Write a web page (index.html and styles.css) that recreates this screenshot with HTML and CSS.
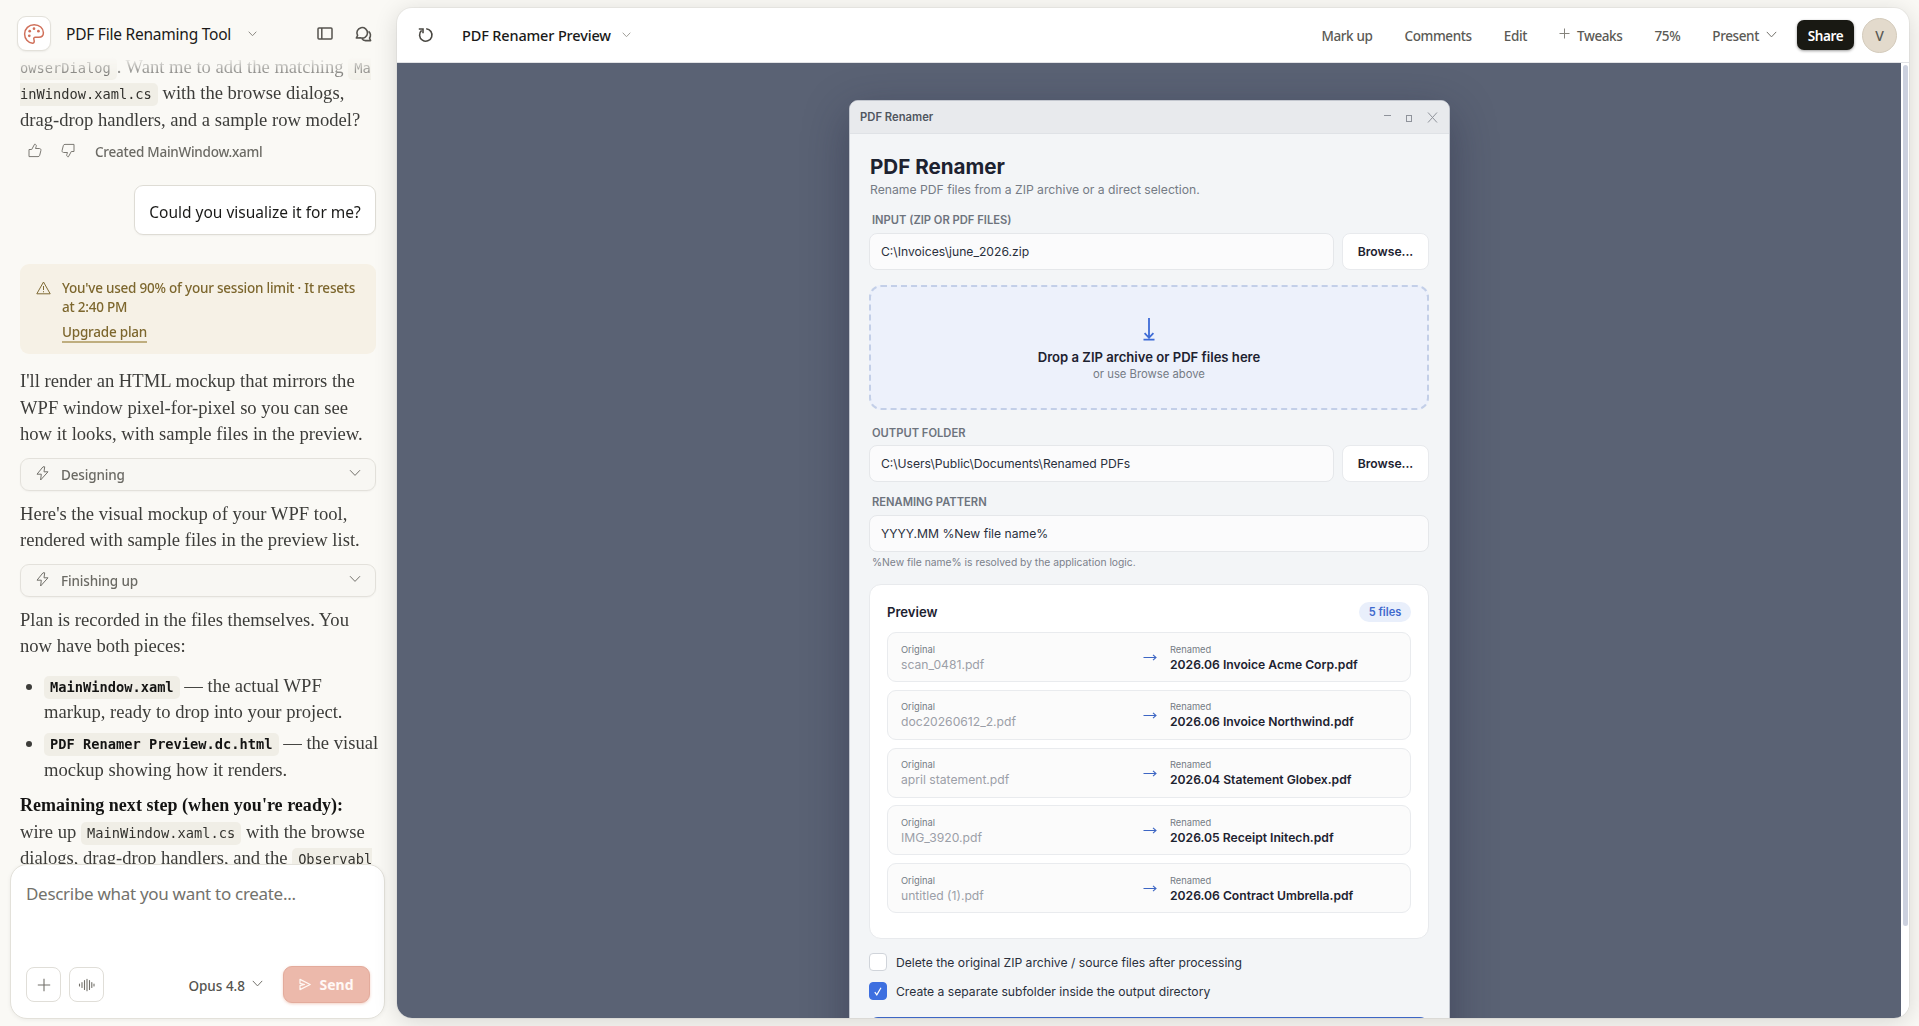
FILE: index.html
```html
<!DOCTYPE html>
<html lang="en">
<head>
	<meta charset="utf-8">
	<title>PDF File Renaming Tool</title>
	<link rel="stylesheet" href="styles.css">
</head>
<body>
	<div class="side">
		<div class="side-head">
			<div class="logo">
				<svg width="22" height="22" viewBox="0 0 22 22" fill="none" stroke="#d0705a" stroke-width="1.5" stroke-linecap="round" stroke-linejoin="round">
					<path d="M9.6 20.2C5 19.6 1.6 15.700 1.600 11C1.600 5.800 5.900 1.700 11.200 1.700C16.400 1.700 20.400 5.300 20.400 9.800C20.400 12.700 18.200 14.300 15.700 14.300H12.400C11 14.300 10.400 15.200 10.900 16.400C11.600 18.300 11.300 20.300 9.600 20.200Z"/>
					<g fill="#d0705a" stroke="none"><circle cx="6.300" cy="12.800" r="1.350"/><circle cx="6.700" cy="8.200" r="1.350"/><circle cx="11" cy="5.700" r="1.350"/><circle cx="15.400" cy="8.200" r="1.350"/></g>
				</svg>
			</div>
			<span class="side-title">PDF File Renaming Tool</span>
			<svg class="title-arrow" width="9" height="6" viewBox="0 0 9 6" fill="none" stroke="#8c8a84"><path d="M.7 .7L4.500 4.700L8.300 .7"/></svg>
			<svg class="ico-panel" width="16" height="13" viewBox="0 0 16 13" fill="none" stroke="#55534e" stroke-width="1.500"><rect x="1" y="1" width="14" height="11" rx="1"/><path d="M4.800 1V12"/></svg>
			<svg class="ico-chat" width="17" height="16" viewBox="0 0 17 16" fill="none" stroke="#55534e" stroke-width="1.600" stroke-linejoin="round"><path d="M1.300 12L2.600 9.500A5.300 5.300 0 1 1 5.300 11.800Z"/><path d="M13.600 5.400C15.800 7 16 10.200 14.500 12L15.600 14.600H10.500C9 14.600 7.700 13.900 7 12.600"/></svg>
		</div>
		<div class="chat">
			<p><code class="cut-left">owserDialog</code>. Want me to add the matching <code class="cut-right">Ma</code><br><code class="cut-left">inWindow.xaml.cs</code> with the browse dialogs,<br>drag-drop handlers, and a sample row model?</p>
			<div class="feedback">
				<svg width="14" height="15" viewBox="0 0 14 15" fill="none" stroke="#7b7973" stroke-linejoin="round"><path d="M1 6.500H3.700L6.600 1.200C8 1.200 8.600 2.300 8.200 3.500L7.500 5.500H11.300C12.500 5.500 13.200 6.400 12.900 7.500L11.700 12.300C11.500 13.200 10.900 13.600 10 13.600H1Z"/></svg>
				<svg width="14" height="15" viewBox="0 0 14 15" fill="none" stroke="#7b7973" stroke-linejoin="round"><path d="M13 8.500H10.300L7.400 13.800C6 13.800 5.400 12.700 5.800 11.500L6.500 9.500H2.700C1.500 9.500 .8 8.600 1.100 7.500L2.300 2.700C2.500 1.800 3.100 1.400 4 1.400H13Z"/></svg>
				<span>Created MainWindow.xaml</span>
			</div>
			<div class="bubble">Could you visualize it for me?</div>
			<div class="limit">
				<svg width="15" height="14" viewBox="0 0 15 14" fill="none" stroke="#7f6a34" stroke-linejoin="round"><path d="M7.500 1L14.200 12.800H.8Z"/><path d="M7.500 5V9M7.500 10.200V11.300"/></svg>
				<div>You've used 90% of your session limit · It resets<br>at 2:40 PM<br><a class="upgrade">Upgrade plan</a></div>
			</div>
			<p>I'll render an HTML mockup that mirrors the<br>WPF window pixel-for-pixel so you can see<br>how it looks, with sample files in the preview.</p>
			<div class="step">
				<svg width="13" height="15" viewBox="0 0 13 15" fill="none" stroke="#73716b" stroke-linejoin="round"><path d="M7 .8L1 8.200H5.300L4.600 14L12 5.800H8L8.700 .8Z"/></svg>
				<span>Designing</span>
				<svg width="12" height="8" viewBox="0 0 12 8" fill="none" stroke="#73716b"><path d="M1 1.200L6 6.400L11 1.200"/></svg>
			</div>
			<p>Here's the visual mockup of your WPF tool,<br>rendered with sample files in the preview list.</p>
			<div class="step">
				<svg width="13" height="15" viewBox="0 0 13 15" fill="none" stroke="#73716b" stroke-linejoin="round"><path d="M7 .8L1 8.200H5.300L4.600 14L12 5.800H8L8.700 .8Z"/></svg>
				<span>Finishing up</span>
				<svg width="12" height="8" viewBox="0 0 12 8" fill="none" stroke="#73716b"><path d="M1 1.200L6 6.400L11 1.200"/></svg>
			</div>
			<p>Plan is recorded in the files themselves. You<br>now have both pieces:</p>
			<ul>
				<li><code>MainWindow.xaml</code> — the actual WPF<br>markup, ready to drop into your project.</li>
				<li><code>PDF Renamer Preview.dc.html</code> — the visual<br>mockup showing how it renders.</li>
			</ul>
			<p><b>Remaining next step (when you're ready):</b><br>wire up <code>MainWindow.xaml.cs</code> with the browse<br>dialogs, drag-drop handlers, and the <code class="cut-right">Observabl</code></p>
		</div>
		<div class="composer">
			<div class="placeholder">Describe what you want to create...</div>
			<div class="tools">
				<button class="sq"><svg width="14" height="14" viewBox="0 0 14 14" stroke="#73716b" stroke-width="1.100"><path d="M7 .8V13.200M.8 7H13.200"/></svg></button>
				<button class="sq"><svg width="17" height="14" viewBox="0 0 17 14" stroke="#73716b" stroke-width="1.100" stroke-linecap="round"><path d="M1.500 6V8M4 4.500V9.500M6.500 2.500V11.500M9 1.200V12.800M11.500 2.500V11.500M13.800 4.500V9.500M16 6V8"/></svg></button>
				<span class="model">Opus 4.8 <svg width="11" height="7" viewBox="0 0 11 7" fill="none" stroke="#73716b"><path d="M.8 .9L5.500 5.900L10.200 .9"/></svg></span>
				<button class="send"><svg width="12" height="13" viewBox="0 0 12 13" fill="none" stroke="#fff8f5" stroke-width="1.200" stroke-linejoin="round"><path d="M1 1.400L11.200 6.500L1 11.600V7.700L5.600 6.500L1 5.300Z"/></svg>Send</button>
			</div>
		</div>
	</div>

	<div class="panel">
		<div class="panel-head">
			<svg class="reload" width="16" height="16" viewBox="0 0 16 16" fill="none" stroke="#4a4843" stroke-width="1.600"><path d="M3.600 3.400A6.200 6.200 0 1 0 8.200 1.800"/><path d="M.8 2H5V6.200"/></svg>
			<span class="file-name">PDF Renamer Preview</span>
			<svg class="file-arrow" width="9" height="6" viewBox="0 0 9 6" fill="none" stroke="#a19f99"><path d="M.7 .7L4.500 4.700L8.300 .7"/></svg>
			<div class="actions">
				<span>Mark up</span>
				<span>Comments</span>
				<span>Edit</span>
				<span class="tweaks"><svg width="11" height="11" viewBox="0 0 11 11" stroke="#85837d"><path d="M5.500 .5V10.500M.5 5.500H10.500"/></svg>Tweaks</span>
				<span>75%</span>
				<span class="present">Present<svg width="11" height="7" viewBox="0 0 11 7" fill="none" stroke="#73716b"><path d="M.8 .9L5.500 5.900L10.200 .9"/></svg></span>
			</div>
			<button class="share">Share</button>
			<div class="avatar">V</div>
		</div>
		<div class="stage">
			<div class="canvas">
				<div class="window">
					<div class="titlebar">
						<span>PDF Renamer</span>
						<svg width="54" height="12" viewBox="0 0 54 12" fill="none" stroke="#8f939b"><path d="M0 4.500H7"/><rect x="22.500" y="4.500" width="5" height="6"/><path d="M44 1.500L53 11.500M53 1.500L44 11.500"/></svg>
					</div>
					<div class="form">
						<h1>PDF Renamer</h1>
						<div class="sub">Rename PDF files from a ZIP archive or a direct selection.</div>
						<div class="label">INPUT (ZIP OR PDF FILES)</div>
						<div class="row">
							<div class="input">C:\Invoices\june_2026.zip</div>
							<button class="browse">Browse...</button>
						</div>
						<div class="drop">
							<svg width="12" height="23" viewBox="0 0 12 23" fill="none" stroke="#3d6bd6" stroke-width="1.800"><path d="M6 0V20M1.600 15.200L6 19.800L10.400 15.200M.5 21.700H11.500"/></svg>
							<b>Drop a ZIP archive or PDF files here</b>
							<span>or use Browse above</span>
						</div>
						<div class="label label-output">OUTPUT FOLDER</div>
						<div class="row">
							<div class="input">C:\Users\Public\Documents\Renamed PDFs</div>
							<button class="browse">Browse...</button>
						</div>
						<div class="label label-pattern">RENAMING PATTERN</div>
						<div class="row">
							<div class="input">YYYY.MM %New file name%</div>
						</div>
						<div class="hint">%New file name% is resolved by the application logic.</div>
						<div class="preview">
							<div class="preview-head"><b>Preview</b><span class="count">5 files</span></div>
							<div class="item">
								<div class="old"><small>Original</small>scan_0481.pdf</div>
								<svg width="14" height="7" viewBox="0 0 14 7" fill="none" stroke="#3d66c4" stroke-width="1.100"><path d="M.5 3.500H13M10 .8L13 3.500L10 6.200"/></svg>
								<div class="new"><small>Renamed</small>2026.06 Invoice Acme Corp.pdf</div>
							</div>
							<div class="item">
								<div class="old"><small>Original</small>doc20260612_2.pdf</div>
								<svg width="14" height="7" viewBox="0 0 14 7" fill="none" stroke="#3d66c4" stroke-width="1.100"><path d="M.5 3.500H13M10 .8L13 3.500L10 6.200"/></svg>
								<div class="new"><small>Renamed</small>2026.06 Invoice Northwind.pdf</div>
							</div>
							<div class="item">
								<div class="old"><small>Original</small>april statement.pdf</div>
								<svg width="14" height="7" viewBox="0 0 14 7" fill="none" stroke="#3d66c4" stroke-width="1.100"><path d="M.5 3.500H13M10 .8L13 3.500L10 6.200"/></svg>
								<div class="new"><small>Renamed</small>2026.04 Statement Globex.pdf</div>
							</div>
							<div class="item">
								<div class="old"><small>Original</small>IMG_3920.pdf</div>
								<svg width="14" height="7" viewBox="0 0 14 7" fill="none" stroke="#3d66c4" stroke-width="1.100"><path d="M.5 3.500H13M10 .8L13 3.500L10 6.200"/></svg>
								<div class="new"><small>Renamed</small>2026.05 Receipt Initech.pdf</div>
							</div>
							<div class="item">
								<div class="old"><small>Original</small>untitled (1).pdf</div>
								<svg width="14" height="7" viewBox="0 0 14 7" fill="none" stroke="#3d66c4" stroke-width="1.100"><path d="M.5 3.500H13M10 .8L13 3.500L10 6.200"/></svg>
								<div class="new"><small>Renamed</small>2026.06 Contract Umbrella.pdf</div>
							</div>
						</div>
						<div class="check"><i></i>Delete the original ZIP archive / source files after processing</div>
						<div class="check"><i class="on"><svg width="8" height="9" viewBox="0 0 8 9" fill="none" stroke="#fff" stroke-width="1.200"><path d="M.8 5.200L2.800 7.900L7 .8"/></svg></i>Create a separate subfolder inside the output directory</div>
						<div class="start"></div>
					</div>
				</div>
			</div>
			<div class="scroll"><div class="thumb"></div></div>
		</div>
	</div>
</body>
</html>
```
FILE: styles.css
```css
*{
	box-sizing: border-box;
}
body{
	display: flex;
	margin: 0;
	height: 1026px;
	overflow: hidden;
	background: #faf9f5;
	font-family: "Segoe UI", "Noto Sans", "Open Sans", sans-serif;
	color: #1a1a18;
}
svg{
	display: block;
	flex: none;
}
button{
	font-family: inherit;
	padding: 0;
}

/* sidebar */
.side{
	flex: none;
	width: 397px;
	height: 1026px;
	display: flex;
	flex-direction: column;
	white-space: nowrap;
}
.side-head{
	flex: none;
	height: 54px;
	display: flex;
	align-items: center;
	padding: 13px 0 0 17px;
}
.logo{
	width: 34px;
	height: 35px;
	display: flex;
	align-items: center;
	justify-content: center;
	background: #fff;
	border: 1px solid #e3e1da;
	border-radius: 9px;
	box-shadow: 0 1px 2px rgba(0,0,0,0.06);
}
.side-title{
	margin-left: 15px;
	width: 182px;
	font-size: 15.500px;
	letter-spacing: -0.230px;
}
.ico-panel{
	margin: -1px 0 0 60px;
}
.ico-chat{
	margin-left: 22px;
}
.chat{
	height: 810px;
	overflow: hidden;
	padding: 0 21px 0 20px;
	-webkit-mask-image: linear-gradient(to bottom, transparent 3px, #000 31px);
	mask-image: linear-gradient(to bottom, transparent 3px, #000 31px);
}
.chat p, .chat ul{
	margin: 0;
	font: 18.600px/26.450px "Liberation Serif", serif;
	color: #3d3d3a;
}
.chat p + .step{
	margin-top: 10px;
}
.step + p{
	margin-top: 10px;
}
.chat b{
	font-size: 18px;
	letter-spacing: 0.030px;
	color: #141413;
}
code{
	font: 13.700px/23px "DejaVu Sans Mono", monospace;
	padding: 3px 6px 4px;
	background: #f0eee6;
	border-radius: 5px;
	color: #33322e;
}
.cut-left{
	padding-left: 0;
	border-radius: 0 5px 5px 0;
}
.cut-right{
	padding-right: 0;
	border-radius: 5px 0 0 5px;
}
li code{
	font-weight: 700;
	color: #141413;
}
.feedback{
	display: flex;
	align-items: center;
	height: 26px;
	margin-top: 6px;
	padding-left: 8px;
	font-size: 13.500px;
	font-weight: 500;
	letter-spacing: -0.250px;
	color: #6b6a64;
}
.feedback svg{
	margin: -4px 19px 0 0;
}
.feedback span{
	margin-left: 1px;
}
.bubble{
	width: 242px;
	height: 50px;
	margin: 20px 0 29px auto;
	font-size: 15.500px;
	line-height: 53px;
	text-align: center;
	background: #fff;
	border: 1px solid #dedcd5;
	border-radius: 9px;
	box-shadow: 0 1px 2px rgba(0,0,0,0.04);
}
.limit{
	display: flex;
	height: 90px;
	margin-bottom: 14px;
	padding: 15px 0 0 16px;
	background: #f6f1e6;
	border-radius: 9px;
	font-size: 13.500px;
	font-weight: 500;
	line-height: 19px;
	letter-spacing: -0.220px;
	color: #7d672e;
}
.limit svg{
	margin: 2px 11px 0 0;
}
.upgrade{
	display: inline-block;
	margin-top: 6px;
	line-height: 18px;
	border-bottom: 2px solid #bfae7f;
}
.step{
	display: flex;
	align-items: center;
	height: 33px;
	padding: 0 14px 0 15px;
	background: #f8f7f3;
	border: 1px solid #e3e1db;
	border-radius: 9px;
	box-shadow: 0 1px 2px rgba(0,0,0,0.04);
	font-size: 13.500px;
	font-weight: 500;
	letter-spacing: -0.150px;
	color: #6b6a64;
}
.step svg{
	margin-top: -2px;
}
.step span{
	flex: 1;
	margin: 2px 0 0 12px;
}
.chat ul{
	margin: 13px 0 9px;
	padding-left: 24px;
}
li + li{
	margin-top: 5px;
}
.composer{
	flex: none;
	width: 375px;
	height: 155px;
	margin-left: 10px;
	padding: 16px 14px 15px 15px;
	display: flex;
	flex-direction: column;
	justify-content: space-between;
	background: #fff;
	border: 1px solid #e3e1da;
	border-radius: 17px;
	box-shadow: 0 1px 4px rgba(0,0,0,0.06);
}
.placeholder{
	font-size: 17px;
	line-height: 26px;
	letter-spacing: -0.300px;
	color: #73726c;
}
.tools{
	display: flex;
	align-items: center;
}
.sq{
	width: 35px;
	height: 35px;
	margin-right: 8px;
	display: flex;
	align-items: center;
	justify-content: center;
	background: #fff;
	border: 1px solid #e0ded8;
	border-radius: 8px;
}
.model{
	display: flex;
	align-items: center;
	gap: 7px;
	margin-left: auto;
	font-size: 13.500px;
	font-weight: 500;
	line-height: 20px;
	padding-top: 2px;
	color: #55544f;
}
.model svg{
	margin-top: -5px;
}
.send{
	width: 87px;
	height: 37px;
	margin-left: 20px;
	display: flex;
	align-items: center;
	justify-content: center;
	gap: 8px;
	background: #ecb9ab;
	border: 1px solid #e3ab9c;
	border-radius: 9px;
	box-shadow: 0 1px 3px rgba(217,119,87,0.35);
	font-size: 14px;
	font-weight: 700;
	color: #fff8f5;
}

/* preview panel */
.panel{
	position: relative;
	flex: none;
	width: 1512px;
	height: 1010px;
	margin-top: 8px;
	background: #fff;
	border-radius: 15px;
	overflow: hidden;
	box-shadow: 0 0 0 1px rgba(0,0,0,0.04), 0 4px 24px rgba(0,0,0,0.14);
}
.panel-head{
	height: 55px;
	display: flex;
	align-items: center;
	padding: 0 12px 0 21px;
	border-bottom: 1px solid #e2e3e6;
}
.reload{
	margin: -1px 28px 0 0;
}
.file-name{
	width: 149px;
	font-size: 14.500px;
	font-weight: 500;
	letter-spacing: -0.150px;
	white-space: nowrap;
}
.file-arrow{
	margin: -1px 0 0 11px;
}
.actions{
	margin: 1px 0 0 auto;
	display: flex;
	align-items: center;
	gap: 32px;
	font-size: 13.500px;
	font-weight: 500;
	letter-spacing: -0.380px;
	line-height: 22px;
	color: #5b5a55;
}
.tweaks, .present{
	display: flex;
	gap: 7px;
}
.tweaks svg{
	margin-top: 3px;
}
.present svg{
	margin-top: 6px;
}
.share{
	width: 57px;
	height: 30px;
	margin: 0 8px 0 20px;
	background: #191913;
	border: 0;
	border-radius: 7px;
	box-shadow: 0 1px 3px rgba(0,0,0,0.4);
	font-size: 13.500px;
	font-weight: 600;
	letter-spacing: -0.350px;
	line-height: 32px;
	color: #fff;
}
.avatar{
	width: 35px;
	height: 35px;
	background: #e3dacc;
	border: 1px solid #d3cabb;
	border-radius: 50%;
	text-align: center;
	font-size: 14px;
	font-weight: 500;
	line-height: 34px;
	color: #5b5a55;
}
.stage{
	display: flex;
	height: 955px;
}
.canvas{
	flex: 1;
	height: 955px;
	overflow: hidden;
	background: #5a6274;
	padding: 37px 0 0 452px;
}
.scroll{
	width: 8px;
	padding: 2px 1px 0 2px;
	background: #fff;
}
.thumb{
	height: 861px;
	background: #ccd1df;
	border-radius: 3px;
}

/* renamer window */
.window{
	width: 601px;
	height: 1000px;
	background: #f3f5f7;
	border: 1px solid #c3c7cf;
	border-radius: 9px;
	box-shadow: 0 14px 45px rgba(30,33,60,0.42);
	font-family: Inter, sans-serif;
	color: #1d2230;
	overflow: hidden;
}
.titlebar{
	display: flex;
	align-items: center;
	justify-content: space-between;
	height: 33px;
	padding: 0 11px 0 10px;
	background: #e8eaed;
	border-bottom: 1px solid #dfe2e6;
	font-size: 11.250px;
	font-weight: 600;
	color: #50565f;
}
.form{
	padding: 19px 20px 0 19px;
}
h1{
	margin: 0 0 0 1px;
	font-size: 20.600px;
	line-height: 28px;
	font-weight: 700;
}
.sub{
	margin-left: 1px;
	font-size: 12.180px;
	line-height: 18px;
	color: #757b85;
}
.label{
	margin: 13px 0 5px 3px;
	font-size: 11.200px;
	font-weight: 600;
	line-height: 16px;
	color: #6d737d;
}
.row{
	display: flex;
	gap: 8px;
	height: 37px;
}
.input{
	flex: 1;
	padding-left: 11px;
	background: #fbfbfc;
	border: 1px solid #e5e7ea;
	border-radius: 8px;
	font-size: 12.150px;
	line-height: 35px;
	color: #2a303c;
}
.browse{
	width: 87px;
	background: #fff;
	border: 1px solid #e8eaed;
	border-radius: 8px;
	font-size: 12.150px;
	font-weight: 600;
	color: #1d2230;
}
.drop{
	display: flex;
	flex-direction: column;
	align-items: center;
	height: 125px;
	margin-top: 15px;
	padding-top: 31px;
	background: #edf1fb;
	border: 2px dashed #c3cfe8;
	border-radius: 12px;
	font-size: 11.280px;
	line-height: 16px;
	color: #757b85;
}
.drop b{
	margin-top: 7px;
	font-size: 13.100px;
	line-height: 18px;
	font-weight: 600;
	color: #1d2230;
}
.label-output{
	margin: 15px 0 4px 3px;
}
.label-pattern{
	margin: 12px 0 5px 3px;
}
.hint{
	margin-left: 3px;
	padding-top: 2px;
	font-size: 10.300px;
	line-height: 16px;
	color: #7b818b;
}
.preview{
	height: 355px;
	margin-top: 14px;
	padding: 17px;
	background: #fff;
	border: 1px solid #e8eaed;
	border-radius: 12px;
}
.preview-head{
	display: flex;
	align-items: center;
	justify-content: space-between;
	height: 20px;
	margin-bottom: 10px;
}
.preview-head b{
	font-size: 13.100px;
	font-weight: 600;
}
.count{
	width: 52px;
	background: #e9effb;
	border-radius: 10px;
	text-align: center;
	font-size: 11.100px;
	font-weight: 600;
	line-height: 20px;
	color: #3f69cd;
}
.item{
	display: grid;
	grid-template-columns: 242px 27px 1fr;
	align-items: center;
	height: 50px;
	margin-bottom: 7.750px;
	padding: 1px 13px 0;
	background: #fbfbfb;
	border: 1px solid #e9ebee;
	border-radius: 9px;
	font-size: 12.150px;
	line-height: 17px;
}
.item small{
	display: block;
	font-size: 9.300px;
	font-weight: 400;
	line-height: 13px;
	color: #757b85;
}
.old{
	color: #9b9fa8;
}
.new{
	font-weight: 600;
}
.check{
	display: flex;
	align-items: center;
	gap: 9px;
	height: 18px;
	margin-top: 14px;
	font-size: 12.150px;
	color: #2a303c;
}
.check + .check{
	margin-top: 11px;
}
.check i{
	width: 18px;
	height: 18px;
	background: #fff;
	border: 1px solid #d0d4da;
	border-radius: 4px;
}
.check .on{
	display: flex;
	align-items: center;
	justify-content: center;
	background: #3d6fe0;
	border-color: #3d6fe0;
}
.start{
	height: 40px;
	margin-top: 17px;
	background: #3d66c4;
	border-radius: 9px;
}
```
